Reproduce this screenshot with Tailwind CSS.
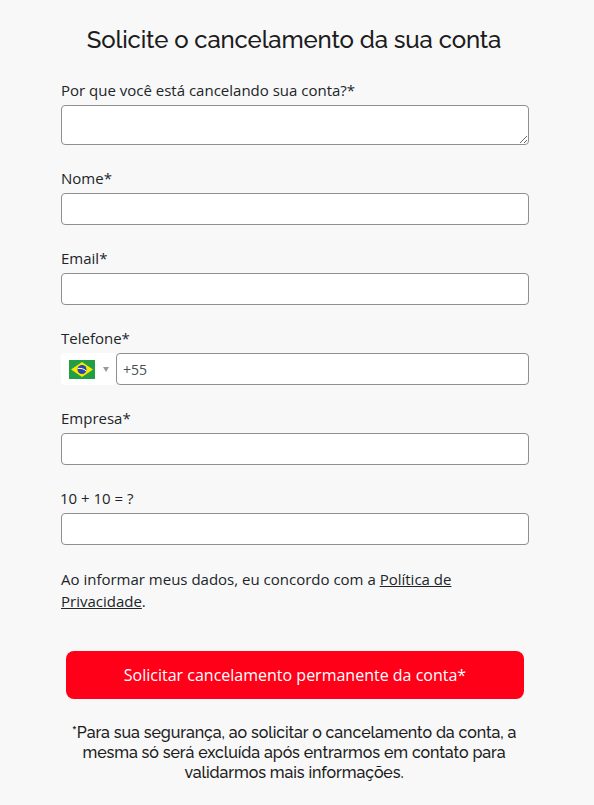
<!DOCTYPE html>
<html><head><meta charset="utf-8"><script src="https://cdn.jsdelivr.net/npm/@tailwindcss/browser@4"></script></head>
<body class="bg-[#f8f8f8] font-['Open_Sans',sans-serif] text-[#212529] w-[594px] h-[805px] overflow-hidden">
<div class="px-[61px] pt-[23px]">
<h1 class="font-['Raleway','Lato',sans-serif] text-[24px] leading-[34px] font-medium text-center text-[#1c1c1c] ml-[-43px] mr-[-37px] tracking-[-0.15px]">Solicite o cancelamento da sua conta</h1>
<form class="mt-[22px] flex flex-col">
<label class="text-[15px] leading-[22px] block">Por que você está cancelando sua conta?*</label>
<textarea class="block w-[468px] h-[40px] mt-[4px] bg-white border border-[#8f8f8f] rounded-[4px]"></textarea>
<label class="text-[15px] leading-[22px] block mt-[22px]">Nome*</label>
<input class="block w-[468px] h-[32px] mt-[4px] bg-white border border-[#8f8f8f] rounded-[4px]">
<label class="text-[15px] leading-[22px] block mt-[22px]">Email*</label>
<input class="block w-[468px] h-[32px] mt-[4px] bg-white border border-[#8f8f8f] rounded-[4px]">
<label class="text-[15px] leading-[22px] block mt-[22px]">Telefone*</label>
<div class="flex h-[32px] mt-[4px] w-[468px]">
<div class="w-[55px] h-[32px] bg-white rounded-[4px] flex items-center pl-[8px] gap-[8px]">
<svg width="26" height="19" viewBox="0 0 26 19"><rect width="26" height="19" fill="#229e45"/><polygon points="13,2 24,9.5 13,17 2,9.5" fill="#f8e509"/><circle cx="13" cy="9.5" r="4.5" fill="#2b49a3"/><path d="M8.8 8.5c3-.5 6 .3 8.2 2.3" stroke="#fff" stroke-width="1" fill="none"/></svg>
<span class="w-0 h-0 border-x-[3px] border-x-transparent border-t-[5px] border-t-[#999] mt-[1px]"></span>
</div>
<input value="+55" class="block w-[413px] h-[32px] bg-white border border-[#8f8f8f] rounded-[4px] pl-[6px] text-[14px] text-[#495057]">
</div>
<label class="text-[15px] leading-[22px] block mt-[22px]">Empresa*</label>
<input class="block w-[468px] h-[32px] mt-[4px] bg-white border border-[#8f8f8f] rounded-[4px]">
<label class="text-[15px] leading-[22px] block mt-[22px] -ml-px">10 + 10 = ?</label>
<input class="block w-[468px] h-[32px] mt-[4px] bg-white border border-[#8f8f8f] rounded-[4px]">
<p class="text-[15px] leading-[22px] mt-[23px]">Ao informar meus dados, eu concordo com a <a class="underline">Política de Privacidade</a>.</p>
<button type="button" class="mt-[39px] mx-[5px] w-[458px] h-[48px] bg-[#ff0018] text-white text-[16px] rounded-[8px]">Solicitar cancelamento permanente da conta*</button>
<p class="font-['Raleway','Lato',sans-serif] text-[16px] leading-[20px] font-medium text-center mt-[24px] text-[#1c1c1c] ml-[-9px] mr-[-3px] tracking-[-0.1px]">*Para sua segurança, ao solicitar o cancelamento da conta, a mesma só será excluída após entrarmos em contato para validarmos mais informações.</p>
</form>
</div>
</body></html>
